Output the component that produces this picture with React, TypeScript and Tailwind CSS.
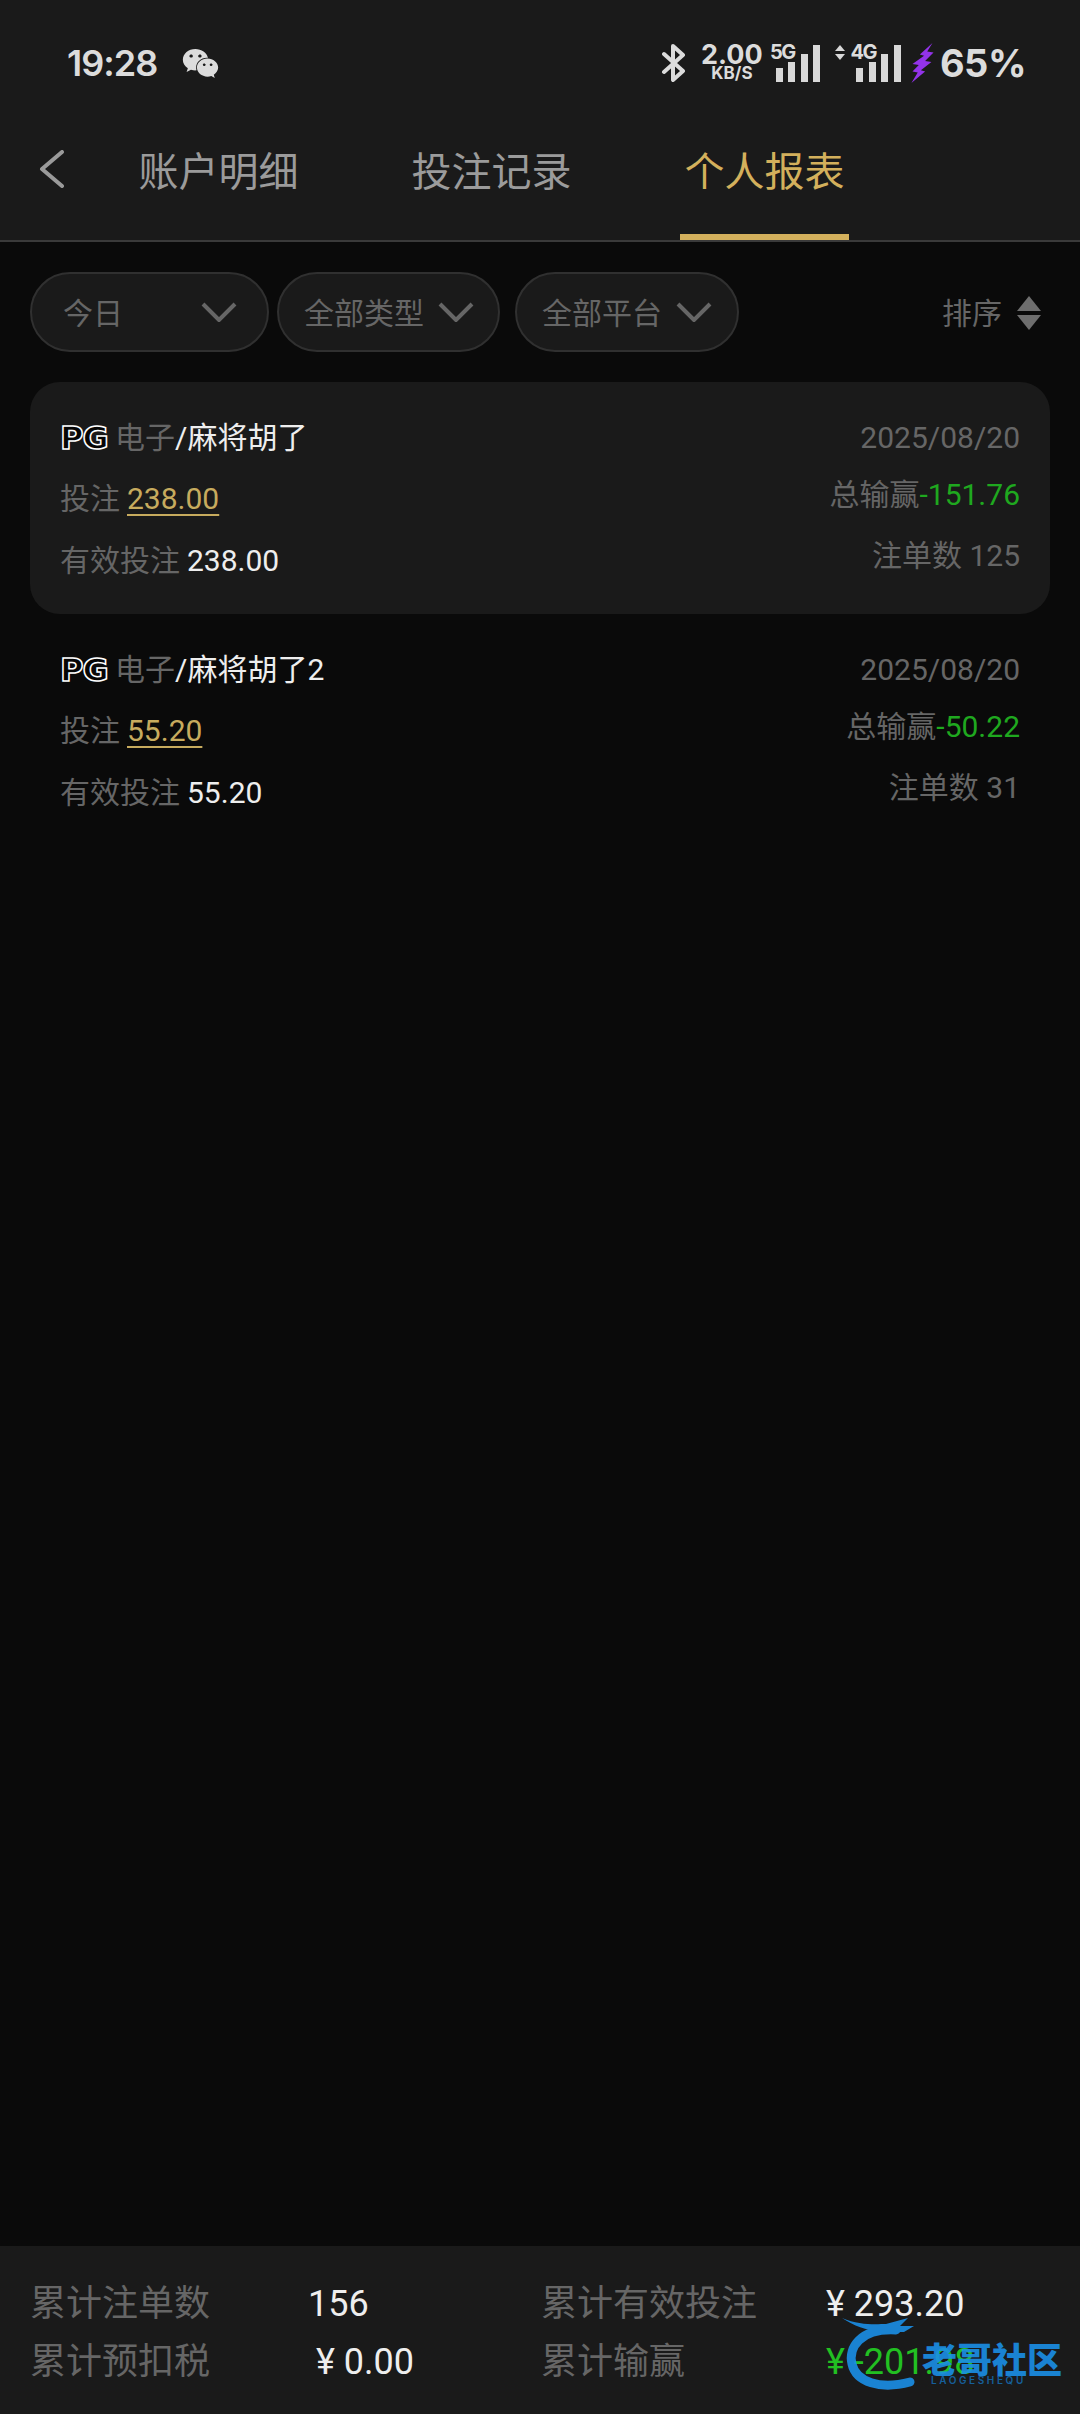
import React from "react";
import { FaWeixin } from "react-icons/fa";

const sans = "font-['Roboto','Noto_Sans_CJK_SC',sans-serif]";
const ui = "font-['Inter','Noto_Sans_CJK_SC',sans-serif]";

function Signal({ label, arrows }: { label: string; arrows?: boolean }) {
  return (
    <div className="flex items-end h-[38px]">
      {arrows && (
        <svg width="10" height="15" viewBox="0 0 10 15" className="mr-[5px] mb-[22px] text-[#d8d8d8]" fill="currentColor">
          <path d="M5 0 L10 6 H0 Z" />
          <path d="M5 15 L0 9 H10 Z" />
        </svg>
      )}
      <div className="relative flex items-end gap-[5.5px] h-[38px] pl-[6px]">
        <span className={`${ui} absolute left-0 top-[-3px] text-[20px] leading-[22px] font-bold tracking-[-1.5px] text-[#dcdcdc]`}>{label}</span>
        <div className="w-[7px] h-[14px] bg-[#d8d8d8]" />
        <div className="w-[7px] h-[20px] bg-[#d8d8d8]" />
        <div className="w-[7px] h-[28px] bg-[#d8d8d8]" />
        <div className="w-[7px] h-[37px] bg-[#d8d8d8]" />
      </div>
    </div>
  );
}

function StatusBar() {
  return (
    <div className={`${ui} flex items-center h-[126px] pl-[67px] pr-[54px] text-[#dcdcdc]`}>
      <span className="text-[36px] font-semibold tracking-[-1px] leading-none">19:28</span>
      <FaWeixin className="ml-[25px] mt-[1px] text-[#dcdcdc]" size={37} />
      <div className="flex-1" />
      <svg width="26" height="38" viewBox="0 0 24 38" fill="none" stroke="#dcdcdc" strokeWidth="4" strokeLinejoin="round" strokeLinecap="round" className="mr-[15px]">
        <path d="M2 10 L21 27 L11 36 V2 L21 11 L2 28" />
      </svg>
      <div className="flex flex-col items-center w-[60px] mr-[8px] mt-[-2px]">
        <span className="text-[27px] font-bold leading-[22px]">2.00</span>
        <span className="text-[17px] font-bold leading-[15px]">KB/S</span>
      </div>
      <Signal label="5G" />
      <div className="w-[15px]" />
      <Signal label="4G" arrows />
      <svg width="24" height="40" viewBox="0 0 22 38" className="ml-[10px] mr-[5px]" fill="#9333ea">
        <path d="M20 0 L8 11 L12 12 L1 20 L7 21 L1 27 L6 28 L0 38 L13 27 L9 26 L19 18 L13 17 L21 9 L15 8 Z" />
      </svg>
      <span className="text-[38px] font-bold leading-none tracking-[-0.5px]">65%</span>
    </div>
  );
}

function Tabs() {
  const tabs = ["账户明细", "投注记录", "个人报表"];
  return (
    <div className="flex h-[114px] border-b-2 border-[#3a3a3a] box-content">
      <div className="pl-[38px] w-[135px] pt-[24px] shrink-0">
        <svg width="28" height="38" viewBox="0 0 28 38" fill="none" stroke="#9a9a9a" strokeWidth="4" strokeLinecap="round" strokeLinejoin="round">
          <path d="M24 2 L4 19 L24 36" />
        </svg>
      </div>
      <div className="flex gap-[104px] ml-[-1px]">
        {tabs.map((t, i) => (
          <div
            key={t}
            className={`w-[169px] h-[114px] text-center text-[40px] leading-[94px] ${
              i === 2 ? "text-[#d3b05c] border-b-[6px] border-[#d3b05c]" : "text-[#9b9b9b]"
            }`}
          >
            {t}
          </div>
        ))}
      </div>
    </div>
  );
}

function Chevron() {
  return (
    <svg width="36" height="20" viewBox="0 0 36 20" fill="none" stroke="#666666" strokeWidth="4" className="shrink-0">
      <path d="M2 2 L18 18 L34 2" />
    </svg>
  );
}

function Pill({ label, cls }: { label: string; cls: string }) {
  return (
    <div className={`flex items-center justify-between h-[80px] rounded-[40px] border-2 border-[#303030] bg-[#1a1a1a] text-[30px] text-[#666666] ${cls}`}>
      <span className="mt-[2px]">{label}</span>
      <Chevron />
    </div>
  );
}

function Filters() {
  return (
    <div className="flex items-center pl-[30px] pr-[39px] pt-[30px]">
      <Pill label="今日" cls="w-[239px] pl-[31px] pr-[30px]" />
      <Pill label="全部类型" cls="w-[223px] ml-[8px] pl-[25px] pr-[24px]" />
      <Pill label="全部平台" cls="w-[224px] ml-[15px] pl-[25px] pr-[25px]" />
      <div className="flex-1" />
      <span className="text-[30px] text-[#666666] mt-[2px]">排序</span>
      <svg width="24" height="34" viewBox="0 0 24 34" className="ml-[15px] mt-[1px]" fill="#6e6e6e">
        <path d="M12 0 L24 15 H0 Z" />
        <path d="M12 34 L0 19 H24 Z" />
      </svg>
    </div>
  );
}

function PgLogo() {
  return (
    <span className="font-['DejaVu_Sans',sans-serif] font-bold text-[32px] leading-none text-[#050505] tracking-[-1px] [-webkit-text-stroke:1.5px_#ffffff] mr-[8px] w-[47px] inline-block">
      PG
    </span>
  );
}

function Row({ game, bet, win, count, active }: { game: string; bet: string; win: string; count: string; active?: boolean }) {
  return (
    <div className={`flex justify-between h-[232px] pl-[30px] pr-[30px] pt-[25px] rounded-[30px] text-[30px] ${sans} ${active ? "bg-[#1a1a1a]" : ""}`}>
      <div className="flex flex-col">
        <div className="flex items-center h-[61px] whitespace-nowrap">
          <PgLogo />
          <span className="text-[#666666]">电子</span>
          <span className="text-[#eeeeee]">/{game}</span>
        </div>
        <div className="flex items-center h-[61px] whitespace-nowrap">
          <span className="text-[#666666]">投注</span>
          <span className="ml-[7px] text-[#c7ab5e] underline underline-offset-[5px] decoration-2">{bet}</span>
        </div>
        <div className="flex items-center h-[63px] whitespace-nowrap">
          <span className="text-[#666666]">有效投注</span>
          <span className="ml-[7px] text-[#eeeeee]">{bet}</span>
        </div>
      </div>
      <div className="flex flex-col items-end">
        <div className="flex items-center h-[61px] text-[#666666]">2025/08/20</div>
        <div className="flex items-center h-[52px] whitespace-nowrap">
          <span className="text-[#666666]">总输赢</span>
          <span className="text-[#1fa81f]">{win}</span>
        </div>
        <div className="flex items-center h-[70px] text-[#666666] whitespace-nowrap">注单数 {count}</div>
      </div>
    </div>
  );
}

function Watermark() {
  return (
    <div className="absolute left-[838px] top-[2312px] w-[230px] h-[84px] opacity-90">
      <svg width="110" height="84" viewBox="0 0 110 84" fill="none" className="absolute left-0 top-0">
        <path d="M58 18 C22 16 10 36 14 52 C18 70 42 78 72 70" stroke="#1b8fe6" strokeWidth="9" strokeLinecap="round" />
        <path d="M4 6 C22 14 40 12 48 12 L70 6 L62 14 L76 14 L66 20 L42 20 C28 18 16 14 4 6 Z" fill="#1b8fe6" />
      </svg>
      <span className="absolute left-[84px] top-[26px] font-['Noto_Sans_CJK_SC',sans-serif] font-black text-[35px] leading-[40px] whitespace-nowrap text-[#1b8fe6]">
        老哥社区
      </span>
      <span className="absolute left-[93px] top-[62px] font-['Inter',sans-serif] font-semibold text-[10px] leading-[12px] tracking-[2.6px] whitespace-nowrap text-[#1667a8]">
        LAOGESHEQU
      </span>
    </div>
  );
}

function Summary() {
  const label = "text-[36px] text-[#666666] leading-[58px] whitespace-nowrap";
  const value = "text-[36px] text-[#eeeeee] leading-[58px] whitespace-nowrap";
  return (
    <div className={`bg-[#1a1a1a] h-[168px] pl-[30px] pt-[29px] grid content-start grid-cols-[278px_233px_285px_auto] ${sans}`}>
      <span className={label}>累计注单数</span>
      <span className={value}>156</span>
      <span className={label}>累计有效投注</span>
      <span className={value}>¥ 293.20</span>
      <span className={label}>累计预扣税</span>
      <span className={`${value} pl-[8px]`}>¥ 0.00</span>
      <span className={label}>累计输赢</span>
      <span className="text-[36px] text-[#22c022] leading-[58px] whitespace-nowrap">¥ -201.98</span>
    </div>
  );
}

export default function App() {
  return (
    <div className={`relative flex flex-col w-[1080px] h-[2414px] overflow-hidden bg-[#0a0a0a] ${sans}`}>
      <div className="bg-[#1a1a1a]">
        <StatusBar />
        <Tabs />
      </div>
      <Filters />
      <div className="flex flex-col px-[30px] pt-[30px] flex-1">
        <Row game="麻将胡了" bet="238.00" win="-151.76" count="125" active />
        <Row game="麻将胡了2" bet="55.20" win="-50.22" count="31" />
      </div>
      <Summary />
      <Watermark />
    </div>
  );
}
